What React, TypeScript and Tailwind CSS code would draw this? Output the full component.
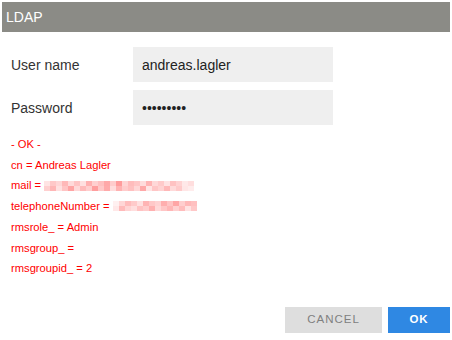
import React from "react";

const mailShades = [
  "#ffe4e4","#ffc8c8","#ffd6d6","#ffb8b8","#ffdada","#ffc4c4","#ffe0e0","#ffb0b0","#ffd0d0","#ffc0c0","#ffa8a8","#ffcccc","#ff9c9c","#ffd4d4","#ffbcbc","#ffc6c6","#ffdcdc","#ffb4b4","#ffd8d8","#ffcaca","#ffe2e2","#ffc2c2","#ffd2d2","#ffe8e8","#ffdede",
  "#ffd0d0","#ffb6b6","#ffe0e0","#ffc4c4","#ffa4a4","#ffd8d8","#ffbaba","#ffcece","#ff9e9e","#ffc8c8","#ffaaaa","#ffdcdc","#ffb2b2","#ffcccc","#ffc0c0","#ffd6d6","#ffa8a8","#ffe4e4","#ffc6c6","#ffd2d2","#ffb8b8","#ffdada","#ffcaca","#ffe6e6","#ffecec"
];
const phoneShades = [
  "#fff0f0","#ffd6d6","#ffbcbc","#ffcaca","#ffe0e0","#ffb4b4","#ffc8c8","#ffd2d2","#ffaeae","#ffc4c4","#ffa6a6","#ffcece","#ffb8b8","#ffc0c0",
  "#ffe8e8","#ffbaba","#ffd4d4","#ffdede","#ffc2c2","#ffcccc","#ffb0b0","#ffd8d8","#ffc6c6","#ffb6b6","#ffd0d0","#ffbcbc","#ffe2e2","#ffc8c8"
];

function Pixels({ shades, cols }: { shades: string[]; cols: number }) {
  return (
    <div className="grid ml-[3px]" style={{ gridTemplateColumns: `repeat(${cols}, 6px)` }}>
      {shades.map((c, i) => (
        <div key={i} className="h-[5px] w-[6px]" style={{ backgroundColor: c }} />
      ))}
    </div>
  );
}

export default function App() {
  const font = { fontFamily: '"Liberation Sans", Arial, sans-serif' };
  return (
    <div className="w-[452px] h-[340px] bg-white p-[2px] flex flex-col" style={font}>
      <div className="h-[30px] bg-[#8b8b86] text-white text-[14px] flex items-center pl-[4px]">LDAP</div>
      <div className="flex flex-col gap-[8px] mt-[15px]">
        <div className="flex items-center">
          <div className="w-[131px] pl-[9px] pt-[2px] text-[14px] text-[#333333]">User name</div>
          <div className="w-[200px] h-[35px] bg-[#efefef] flex items-center pl-[9px] pt-[1px] text-[14px] text-[#222222]">andreas.lagler</div>
        </div>
        <div className="flex items-center">
          <div className="w-[131px] pl-[9px] pt-[2px] text-[14px] text-[#333333]">Password</div>
          <div className="w-[200px] h-[35px] bg-[#efefef] flex items-center pl-[9px] pt-[1px] text-[14px] text-[#222222]">•••••••••</div>
        </div>
      </div>
      <div className="mt-[9px] pl-[9px] text-[11.2px] text-[#ff0000] leading-[20.7px] flex flex-col">
        <div>- OK -</div>
        <div>cn = Andreas Lagler</div>
        <div className="flex items-center">
          <span>mail =</span>
          <Pixels shades={mailShades} cols={25} />
        </div>
        <div className="flex items-center">
          <span>telephoneNumber =</span>
          <Pixels shades={phoneShades} cols={14} />
        </div>
        <div>rmsrole_ = Admin</div>
        <div>rmsgroup_ =</div>
        <div>rmsgroupid_ = 2</div>
      </div>
      <div className="flex-1" />
      <div className="flex justify-end gap-[6px] mb-[5px]">
        <button className="w-[97px] h-[26px] bg-[#dedede] text-[#808080] text-[11.5px] tracking-[1px] flex items-center justify-center">CANCEL</button>
        <button className="w-[62px] h-[26px] bg-[#2f88e3] text-white font-bold text-[11.5px] tracking-[1px] flex items-center justify-center">OK</button>
      </div>
    </div>
  );
}
